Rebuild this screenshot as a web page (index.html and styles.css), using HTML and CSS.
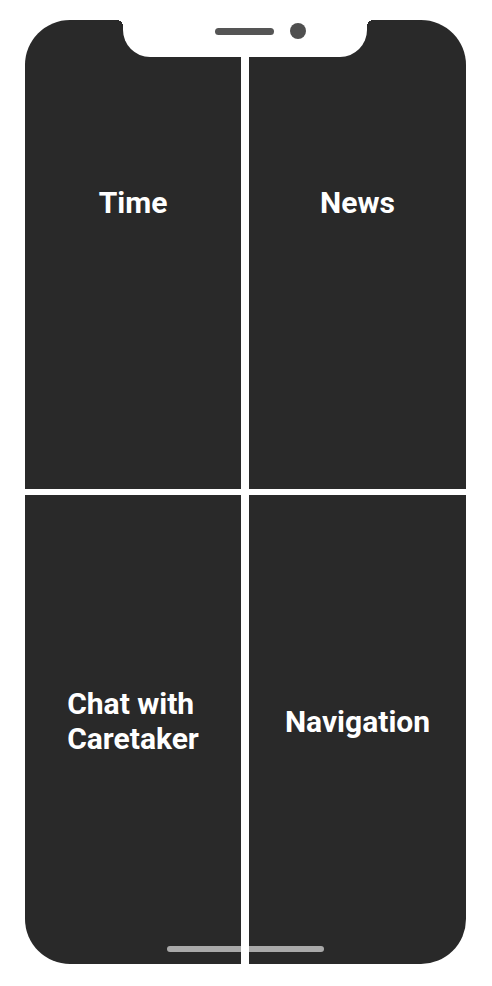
FILE: index.html
```html
<!DOCTYPE html>
<html lang="en">
<head>
<meta charset="utf-8">
<title>Home</title>
<link rel="stylesheet" href="styles.css">
</head>
<body>
  <div class="phone">
    <div class="tile tile-top"><span class="label">Time</span></div>
    <div class="tile tile-top"><span class="label">News</span></div>
    <div class="tile tile-bottom"><span class="label label-multi">Chat with<br>Caretaker</span></div>
    <div class="tile tile-bottom"><span class="label">Navigation</span></div>
    <div class="notch">
      <span class="speaker"></span>
      <span class="camera"></span>
    </div>
    <div class="home-bar"></div>
  </div>
</body>
</html>
```

FILE: styles.css
```css
html, body {
  margin: 0;
  padding: 0;
  background: #ffffff;
}

body {
  font-family: Roboto, "Liberation Sans", Arial, sans-serif;
}

.phone {
  position: relative;
  margin: 20px 0 0 25px;
  width: 441px;
  height: 944px;
  border-radius: 45px;
  overflow: hidden;
  display: grid;
  grid-template-columns: 216px 217px;
  grid-template-rows: 469px 469px;
  column-gap: 8px;
  row-gap: 6px;
  background: #ffffff;
}

.tile {
  background: #292929;
  display: flex;
  justify-content: center;
  box-sizing: border-box;
}

.tile-top {
  align-items: flex-start;
  padding-top: 165px;
}

.tile-bottom {
  align-items: center;
  padding-bottom: 17px;
}

.label {
  color: #ffffff;
  font-weight: 700;
  font-size: 30px;
  line-height: 35px;
  text-align: center;
}

.label-multi {
  text-align: left;
}

.notch {
  position: absolute;
  top: 0;
  left: 98px;
  width: 244px;
  height: 37px;
  background: #ffffff;
  border-radius: 0 0 27px 27px;
}

.notch::before,
.notch::after {
  content: "";
  position: absolute;
  top: 0;
  width: 6px;
  height: 6px;
}

.notch::before {
  left: -6px;
  background: radial-gradient(circle at 0 100%, transparent 6px, #ffffff 6px);
}

.notch::after {
  right: -6px;
  background: radial-gradient(circle at 100% 100%, transparent 6px, #ffffff 6px);
}

.speaker {
  position: absolute;
  top: 8px;
  left: 92px;
  width: 59px;
  height: 7px;
  border-radius: 4px;
  background: #555555;
}

.camera {
  position: absolute;
  top: 3px;
  left: 167px;
  width: 16px;
  height: 16px;
  border-radius: 50%;
  background: #4f4f4f;
}

.home-bar {
  position: absolute;
  left: 142px;
  bottom: 12px;
  width: 157px;
  height: 6px;
  border-radius: 3px;
  background: linear-gradient(to right, #a9a9a9 74px, #ffffff 74px, #ffffff 82px, #a9a9a9 82px);
}
```
